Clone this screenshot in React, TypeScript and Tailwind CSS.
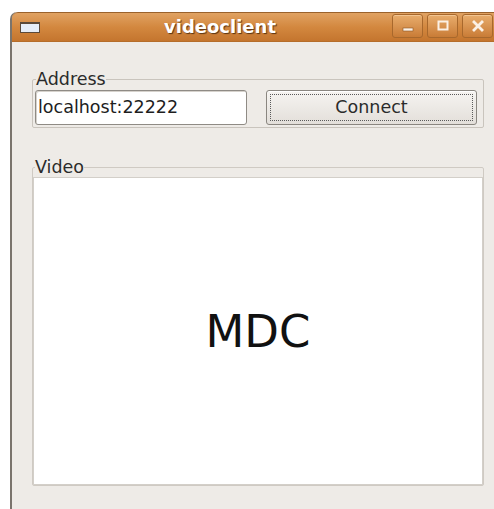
import React from "react";

// title bar buttons (minimize / maximize / close)
const WinButton = ({ kind }: { kind: "min" | "max" | "close" }) => (
  <div className="flex h-[24px] w-[31px] shrink-0 items-center justify-center rounded-[3px] border border-[#a8682c] bg-gradient-to-b from-[#e8ad6c] to-[#c97c36] shadow-[inset_0_1px_0_#f3c591]">
    <svg width="14" height="14" viewBox="0 0 14 14">
      {kind === "min" && <rect x="2" y="9" width="10" height="3" fill="#fbf1e6" stroke="#8d5522" strokeWidth="0.6" />}
      {kind === "max" && (
        <rect x="2.5" y="2.5" width="9" height="8" fill="none" stroke="#fbf1e6" strokeWidth="2" />
      )}
      {kind === "close" && (
        <path d="M3 3 L11 11 M11 3 L3 11" stroke="#fbf1e6" strokeWidth="2.8" strokeLinecap="square" />
      )}
    </svg>
  </div>
);

const TitleBar = () => (
  <div className="flex h-[30px] items-center rounded-tl-[6px] border-t border-[#9a622c] border-b border-b-[#b56d2b] bg-gradient-to-b from-[#e0a262] via-[#d3883f] to-[#c4752e]">
    {/* app icon */}
    <div className="ml-[8px] h-[11px] w-[20px] shrink-0 border border-[#5b4a3a] border-t-[2px] bg-[#e6eef8]" />
    <div className="w-[352px] shrink-0 pl-[8px] text-center text-[18px] font-bold leading-none text-white [text-shadow:1px_1px_1px_#5a3412]">
      videoclient
    </div>
    <div className="flex gap-[4px] self-start pt-[1px]">
      <WinButton kind="min" />
      <WinButton kind="max" />
      <WinButton kind="close" />
    </div>
  </div>
);

export default function App() {
  return (
    <div className="h-[509px] w-[494px] overflow-hidden bg-white pl-[10px] pt-[12px] font-['DejaVu_Sans',sans-serif] text-[#2b2b2b]">
      <div className="flex h-full w-[520px] shrink-0 flex-col rounded-tl-[7px] border-l-2 border-[#7a746d]">
        <TitleBar />
        <div className="flex-1 bg-[#eeebe7] pl-[20px] pt-[27px]">
          {/* Address frame */}
          <fieldset className="w-[452px] rounded-[2px] border border-[#c9c4bd]">
            <legend className="ml-[3px] text-[17.5px] leading-[20px]">Address</legend>
            <div className="flex gap-[19px] pb-[2px] pl-[2px] pt-[1px]">
              <div className="flex h-[35px] w-[212px] items-center rounded-[3px] border border-[#8f8b85] bg-white pl-[2px] text-[17.5px] text-[#1e1e1e] shadow-[inset_1px_1px_0_#d6d2cc]">
                localhost:22222
              </div>
              <button className="h-[35px] w-[211px] rounded-[3px] border border-[#8a8680] bg-gradient-to-b from-[#f6f4f1] to-[#e3dfda] p-[3px] shadow-[inset_0_1px_0_#fff]">
                <div className="flex h-full w-full items-center justify-center border border-dotted border-[#5a5a5a] text-[17.5px] text-[#2b2b2b]">
                  Connect
                </div>
              </button>
            </div>
          </fieldset>

          {/* Video frame */}
          <fieldset className="mt-[29px] w-[452px] rounded-[2px] border border-[#cfcac3]">
            <legend className="ml-[2px] text-[17.5px] leading-[20px]">Video</legend>
            <div className="flex h-[308px] items-center justify-center border border-[#d3cfc9] bg-white text-[45px] leading-none text-[#111]">
              MDC
            </div>
          </fieldset>
        </div>
      </div>
    </div>
  );
}
